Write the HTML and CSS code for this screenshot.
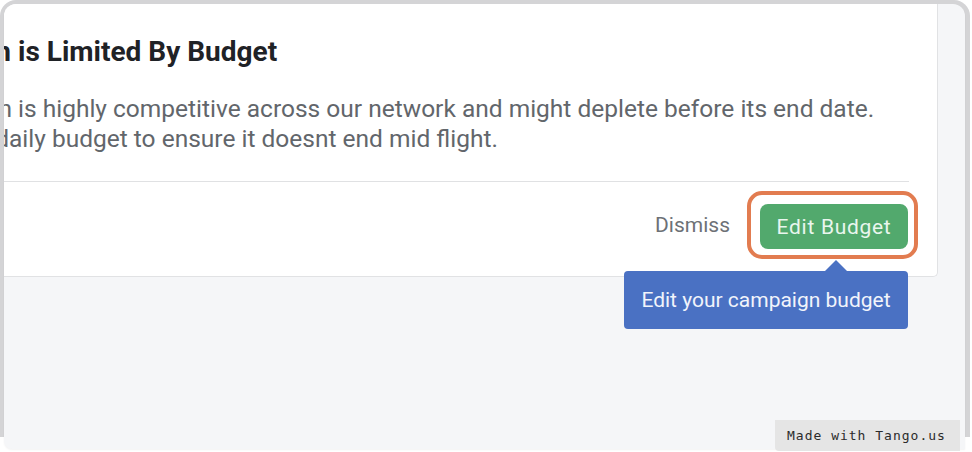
FILE: index.html
```html
<!DOCTYPE html>
<html>
<head>
<meta charset="utf-8">
<link rel="stylesheet" href="styles.css">
</head>
<body>
<div class="page">
  <div class="frame">
    <div class="screen">
      <div class="card">
        <div class="title line"><span class="clip clip-title"><span>Campaign&nbsp;</span></span><span>is Limited By Budget</span></div>
        <div class="desc">
          <div class="line"><span class="clip clip-l1"><span>Your campaign&nbsp;</span></span><span>is highly competitive across our network and might deplete before its end date.</span></div>
          <div class="line"><span class="clip clip-l2"><span>Increase your d</span></span><span>aily budget to ensure it doesnt end mid flight.</span></div>
        </div>
        <div class="divider"></div>
        <div class="actions">
          <span class="dismiss">Dismiss</span>
          <div class="ring">
            <button class="primary">Edit Budget</button>
            <div class="tooltip">Edit your campaign budget</div>
          </div>
        </div>
      </div>
    </div>
  </div>
  <div class="badge">Made with Tango.us</div>
</div>
</body>
</html>
```

FILE: styles.css
```css
* { box-sizing: border-box; }
html, body { margin: 0; padding: 0; background: #ffffff; }
body { font-family: Roboto, "Noto Sans", sans-serif; width: 972px; height: 452px; overflow: hidden; }

.page { position: relative; width: 972px; height: 452px; }

.frame {
  width: 970px;
  height: 437px;
  background: #d4d4d6;
  border-radius: 16px 16px 0 0;
  padding: 4px 5px 0 4px;
}

.screen {
  height: 445px;
  background: #f5f6f8;
  border-radius: 12px 12px 0 8px;
  overflow: hidden;
  box-shadow: 0 1px 2px rgba(0,0,0,0.05);
}

.card {
  width: 934px;
  background: #ffffff;
  border-right: 1px solid #e1e2e4;
  border-bottom: 1px solid #e1e2e4;
  border-radius: 0 0 5px 0;
  padding: 31px 28px 17px 0;
}

.line { display: flex; white-space: nowrap; }

.clip {
  display: flex;
  justify-content: flex-end;
  overflow: hidden;
  flex: none;
}
.clip > span { flex: none; }

.title {
  font-size: 28px;
  line-height: 34px;
  font-weight: 700;
  color: #1f2226;
}
.clip-title { width: 14px; }

.desc {
  margin-top: 25px;
  font-size: 24.5px;
  line-height: 30px;
  color: #62666b;
}
.clip-l1 { width: 14px; }
.clip-l2 { width: 5px; }

.divider {
  margin-top: 27px;
  height: 1px;
  background: #e0e1e3;
}

.actions {
  margin-top: 9px;
  display: flex;
  justify-content: flex-end;
  align-items: center;
  gap: 17px;
  margin-right: -9px;
}

.dismiss {
  font-size: 21px;
  color: #6d7176;
}

.ring {
  position: relative;
  border: 4px solid #e27c50;
  border-radius: 15px;
  padding: 9px 6px 6px 9px;
  display: flex;
}

.primary {
  width: 148px;
  height: 45px;
  border: 0;
  border-radius: 8px;
  background: #52a96d;
  color: #e9f6ee;
  font-family: Roboto, "Noto Sans", sans-serif;
  font-size: 21px;
  letter-spacing: 0.7px;
  padding: 0;
}

.tooltip {
  position: absolute;
  top: 76px;
  right: 6px;
  width: 284px;
  height: 58px;
  background: #4a71c3;
  border-radius: 4px;
  color: #f1f4fb;
  font-size: 21px;
  display: flex;
  align-items: center;
  justify-content: center;
  white-space: nowrap;
}
.tooltip::before {
  content: "";
  position: absolute;
  left: 201px;
  top: -11px;
  border-left: 11px solid transparent;
  border-right: 11px solid transparent;
  border-bottom: 11px solid #4a71c3;
}

.badge {
  position: absolute;
  left: 775px;
  top: 420px;
  width: 185px;
  height: 31px;
  background: #e5e5e5;
  border-radius: 0 0 0 4px;
  font-family: "DejaVu Sans Mono", "Liberation Mono", monospace;
  font-size: 13px;
  letter-spacing: 1px;
  color: #2b2b2b;
  display: flex;
  align-items: center;
  padding-left: 12px;
}
```
